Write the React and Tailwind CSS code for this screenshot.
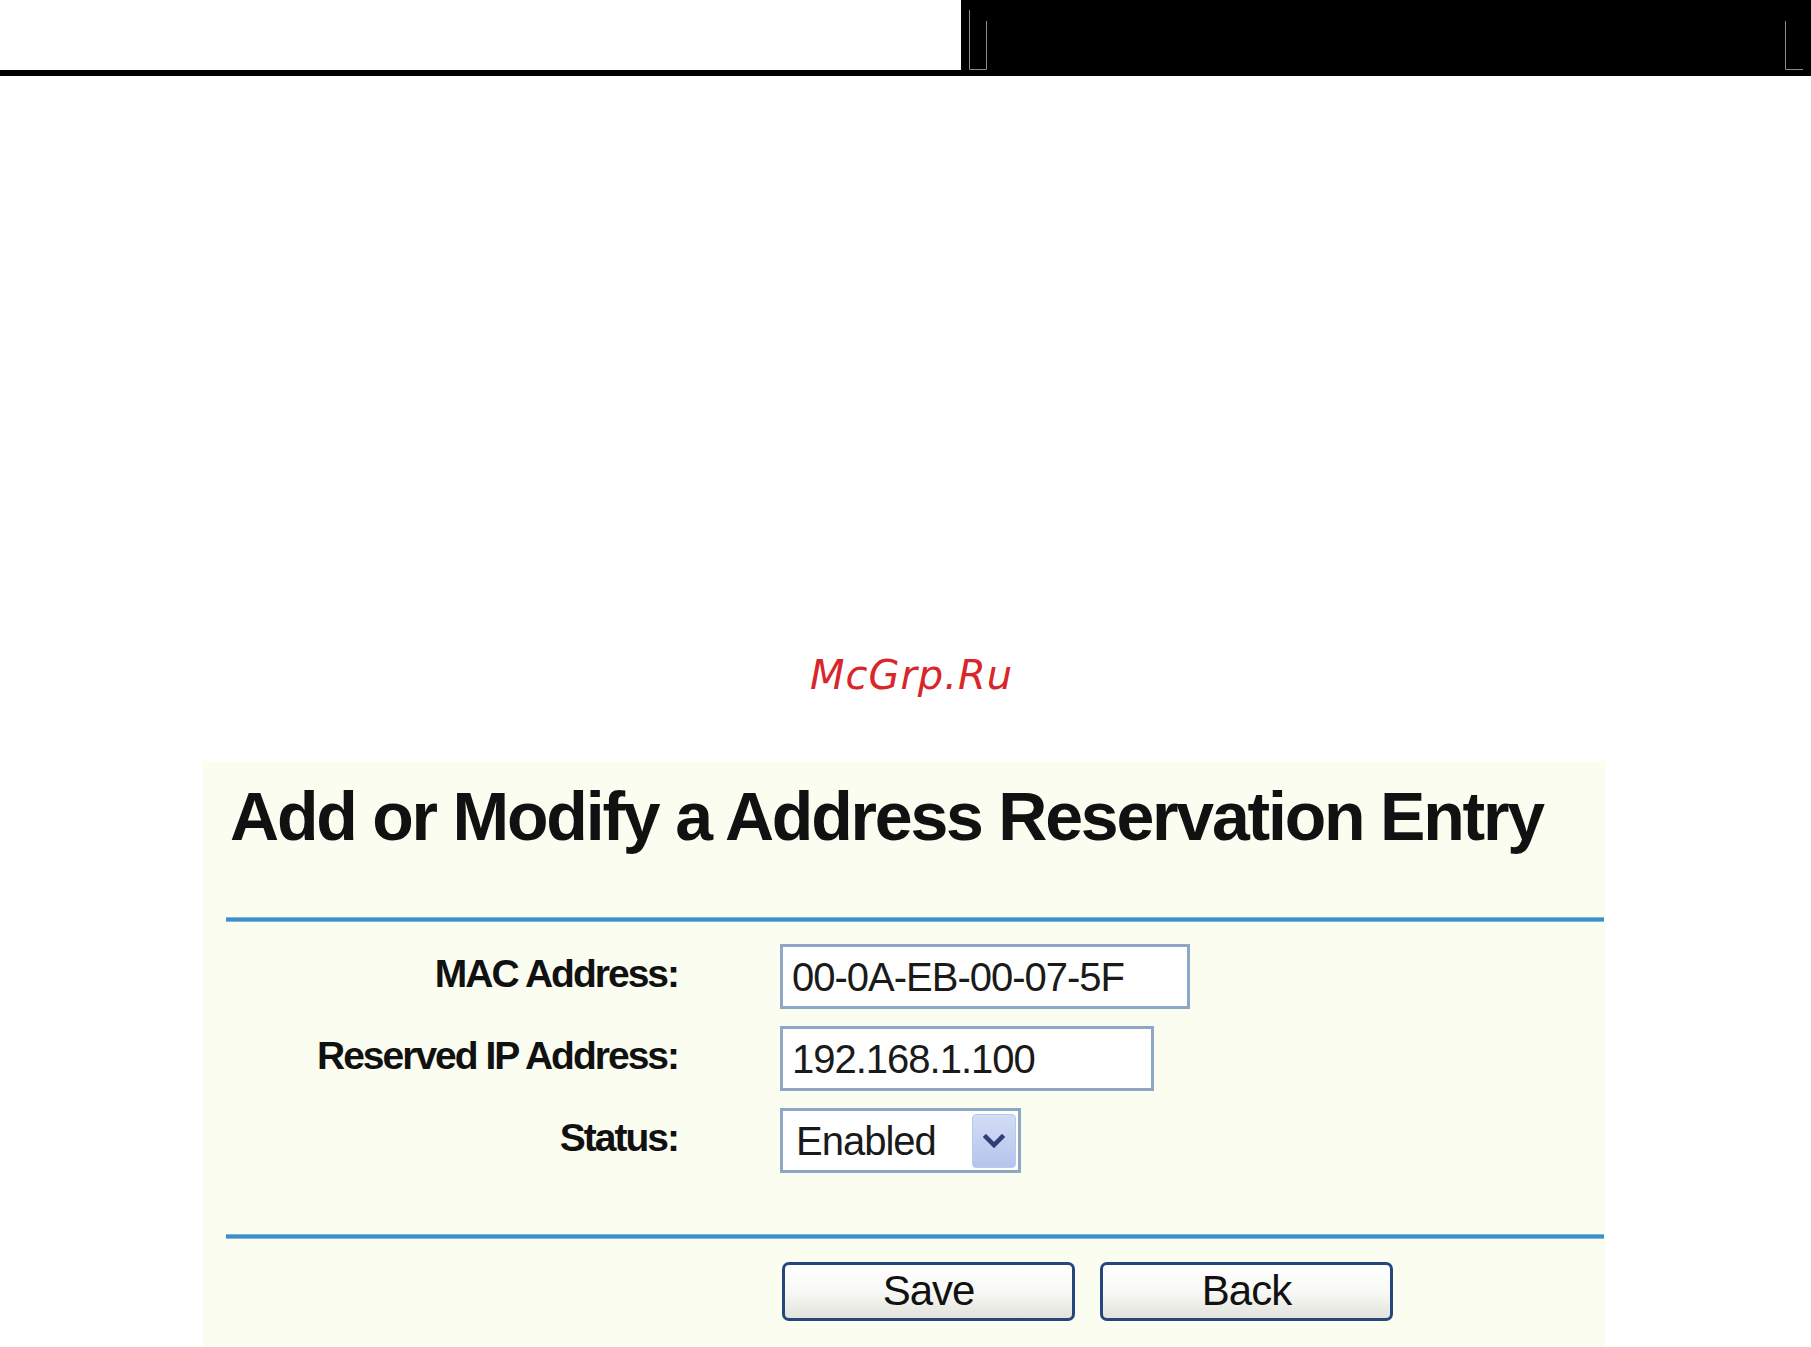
import React from "react";

function CornerLeft() {
  return (
    <svg width="18" height="60" viewBox="0 0 18 60" className="block">
      <path d="M0.5 0 V59.5 H17.5 V11" fill="none" stroke="#8a8a8a" strokeWidth="1" />
    </svg>
  );
}

function CornerRight() {
  return (
    <svg width="18" height="60" viewBox="0 0 18 60" className="block">
      <path d="M0.5 11 V59.5 H18" fill="none" stroke="#8a8a8a" strokeWidth="1" />
    </svg>
  );
}

function Field({ label, children }) {
  return (
    <div className="flex items-center h-[65px]">
      <div className="w-[475px] pb-[7px] text-right text-[39px] leading-none font-bold tracking-[-2px] text-[#111]">
        {label}
      </div>
      <div className="ml-[102px]">{children}</div>
    </div>
  );
}

function TextBox({ value, width }) {
  return (
    <div
      className="h-[65px] border-[3px] border-[#8ea7c6] bg-white flex items-center pl-[9px] text-[40px] leading-none tracking-[-1px] text-[#1a1a1a]"
      style={{ width }}
    >
      {value}
    </div>
  );
}

function StatusSelect() {
  return (
    <div className="w-[241px] h-[65px] border-[3px] border-[#8ea7c6] bg-white flex items-center justify-between pl-[13px] pr-[2px]">
      <span className="text-[40px] leading-none tracking-[-1px] text-[#1a1a1a]">Enabled</span>
      <div className="w-[44px] h-[54px] rounded-[4px] border border-[#b9c9ee] bg-gradient-to-b from-[#d3ddf6] to-[#b4c4ec] flex items-center justify-center">
        <svg width="22" height="14" viewBox="0 0 22 14">
          <path d="M3 3 L11 11 L19 3" fill="none" stroke="#2d3f73" strokeWidth="4.5" strokeLinecap="square" />
        </svg>
      </div>
    </div>
  );
}

function PanelButton({ children }) {
  return (
    <button className="w-[293px] h-[59px] rounded-[7px] border-[3px] border-[#27467e] bg-gradient-to-b from-white via-[#f8f8f6] to-[#e3e3dc] text-[42px] leading-none tracking-[-1px] text-[#111] flex items-center justify-center pb-[2px]">
      {children}
    </button>
  );
}

export default function App() {
  return (
    <div className="w-[1811px] h-[1347px] overflow-hidden bg-white font-['Liberation_Sans',Arial,sans-serif]">
      {/* header strip */}
      <div className="flex h-[70px]">
        <div className="w-[961px] bg-white" />
        <div className="flex-1 bg-black flex items-end justify-between px-[8px]">
          <CornerLeft />
          <CornerRight />
        </div>
      </div>
      <div className="h-[6px] bg-black" />

      {/* site mark */}
      <div className="mt-[579px] h-[40px] flex justify-center">
        <span className="pl-[12px] text-[40px] leading-none italic tracking-[1px] text-[#d8262a] font-['DejaVu_Sans',sans-serif]">
          McGrp.Ru
        </span>
      </div>

      {/* reservation form */}
      <div className="mt-[66px] ml-[203px] w-[1402px] h-[620px] bg-[#fafdf0] pt-[21px]">
        <h1 className="pl-[27px] text-[68px] leading-none font-bold tracking-[-2.2px] text-[#111]">
          Add or Modify a Address Reservation Entry
        </h1>
        <div className="mt-[67px] ml-[23px] mr-[1px] h-[5px] bg-[#3d8fcc] border-y border-[#7ab6e0]" />

        <div className="mt-[22px] flex flex-col gap-[17px]">
          <Field label="MAC Address:">
            <TextBox value="00-0A-EB-00-07-5F" width={410} />
          </Field>
          <Field label="Reserved IP Address:">
            <TextBox value="192.168.1.100" width={374} />
          </Field>
          <Field label="Status:">
            <StatusSelect />
          </Field>
        </div>

        <div className="mt-[61px] ml-[23px] mr-[1px] h-[5px] bg-[#3d8fcc] border-y border-[#7ab6e0]" />

        <div className="mt-[23px] ml-[579px] flex gap-[25px]">
          <PanelButton>Save</PanelButton>
          <PanelButton>Back</PanelButton>
        </div>
      </div>
    </div>
  );
}
